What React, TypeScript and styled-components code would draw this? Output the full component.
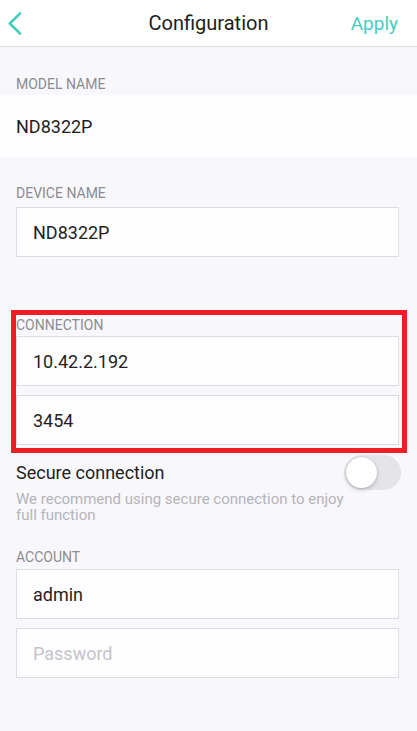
import styled, { createGlobalStyle } from "styled-components";

const GlobalStyle = createGlobalStyle`
  html, body {
    margin: 0;
    padding: 0;
    background: #f8f7fb;
    font-family: Roboto, "Liberation Sans", sans-serif;
  }
`;

const TEAL = "#48cebf";

export default function App() {
  return (
    <>
      <GlobalStyle />
      <Screen>
        <Header>
          <BackButton aria-label="Back">
            <svg width="14" height="24" viewBox="0 0 14 24">
              <polyline
                points="12,1.5 1.8,11.5 12,21.5"
                fill="none"
                stroke={TEAL}
                strokeWidth="2.6"
                strokeLinecap="round"
                strokeLinejoin="round"
              />
            </svg>
          </BackButton>
          <Title>Configuration</Title>
          <ApplyButton>Apply</ApplyButton>
        </Header>

        <Content>
          <Label $top={29}>MODEL NAME</Label>
          <ReadOnlyBand>ND8322P</ReadOnlyBand>

          <Label $top={28}>DEVICE NAME</Label>
          <Field $top={6} defaultValue="ND8322P" />

          <Highlight>
            <Label $top={0}>CONNECTION</Label>
            <Field $top={3} defaultValue="10.42.2.192" />
            <Field $top={9} defaultValue="3454" />
          </Highlight>

          <SwitchRow>
            <SwitchLabel>Secure connection</SwitchLabel>
            <Toggle role="switch" aria-checked="false">
              <Knob />
            </Toggle>
          </SwitchRow>
          <Hint>We recommend using secure connection to enjoy full function</Hint>

          <Label $top={26}>ACCOUNT</Label>
          <Field $top={4} defaultValue="admin" />
          <Field $top={9} placeholder="Password" type="password" />
        </Content>
      </Screen>
    </>
  );
}

const Screen = styled.div`
  min-height: 731px;
  background: #f8f7fb;
`;

const Header = styled.header`
  height: 46px;
  display: grid;
  grid-template-columns: 80px 1fr 80px;
  align-items: center;
  background: #ffffff;
  border-bottom: 1px solid #dcdbe0;
`;

const BackButton = styled.button`
  justify-self: start;
  margin-left: 8px;
  margin-top: 1px;
  padding: 0;
  border: none;
  background: none;
  display: flex;
`;

const Title = styled.h1`
  margin: 0;
  text-align: center;
  font-size: 20px;
  font-weight: 400;
  color: #1d1d20;
`;

const ApplyButton = styled.button`
  justify-self: end;
  margin-right: 19px;
  padding: 0;
  border: none;
  background: none;
  font-family: inherit;
  font-size: 19px;
  color: ${TEAL};
`;

const Content = styled.main`
  display: flex;
  flex-direction: column;
  padding: 0 18px 40px 16px;
`;

const Label = styled.div<{ $top: number }>`
  margin-top: ${(p) => p.$top}px;
  font-size: 14px;
  line-height: 16px;
  color: #8d8c91;
`;

const ReadOnlyBand = styled.div`
  margin: 3px -18px 0 -16px;
  height: 62px;
  padding-left: 16px;
  display: flex;
  align-items: center;
  background: #fefdff;
  font-size: 18px;
  color: #1f1f22;
`;

const Field = styled.input<{ $top: number }>`
  box-sizing: border-box;
  width: 100%;
  height: 50px;
  margin: ${(p) => p.$top}px 0 0;
  padding: 0 16px;
  border: 1px solid #dddce0;
  border-radius: 0;
  background: #fefdff;
  font-family: inherit;
  font-size: 18px;
  color: #1f1f22;
  outline: none;

  &::placeholder {
    color: #c5c4c9;
  }
`;

const Highlight = styled.section`
  display: flex;
  flex-direction: column;
  margin: 53px -8px 0 -5px;
  padding: 2px 3px 3px 0;
  border: 5px solid #ee1d26;
  border-left-width: 5px;
`;

const SwitchRow = styled.div`
  margin-top: 2px;
  height: 35px;
  display: flex;
  align-items: center;
  justify-content: space-between;
`;

const SwitchLabel = styled.span`
  font-size: 18px;
  color: #1f1f22;
`;

const Toggle = styled.div`
  box-sizing: border-box;
  width: 57px;
  height: 35px;
  margin-right: -2px;
  padding: 2px;
  border-radius: 18px;
  background: #e5e4e9;
  display: flex;
  align-items: center;
`;

const Knob = styled.div`
  width: 31px;
  height: 31px;
  border-radius: 50%;
  background: #ffffff;
  box-shadow: 0 0 0 0.5px rgba(0, 0, 0, 0.12), 0 2px 4px rgba(0, 0, 0, 0.18);
`;

const Hint = styled.p`
  margin: 1px 0 0;
  max-width: 335px;
  font-size: 15px;
  line-height: 16px;
  color: #b5b4ba;
`;
